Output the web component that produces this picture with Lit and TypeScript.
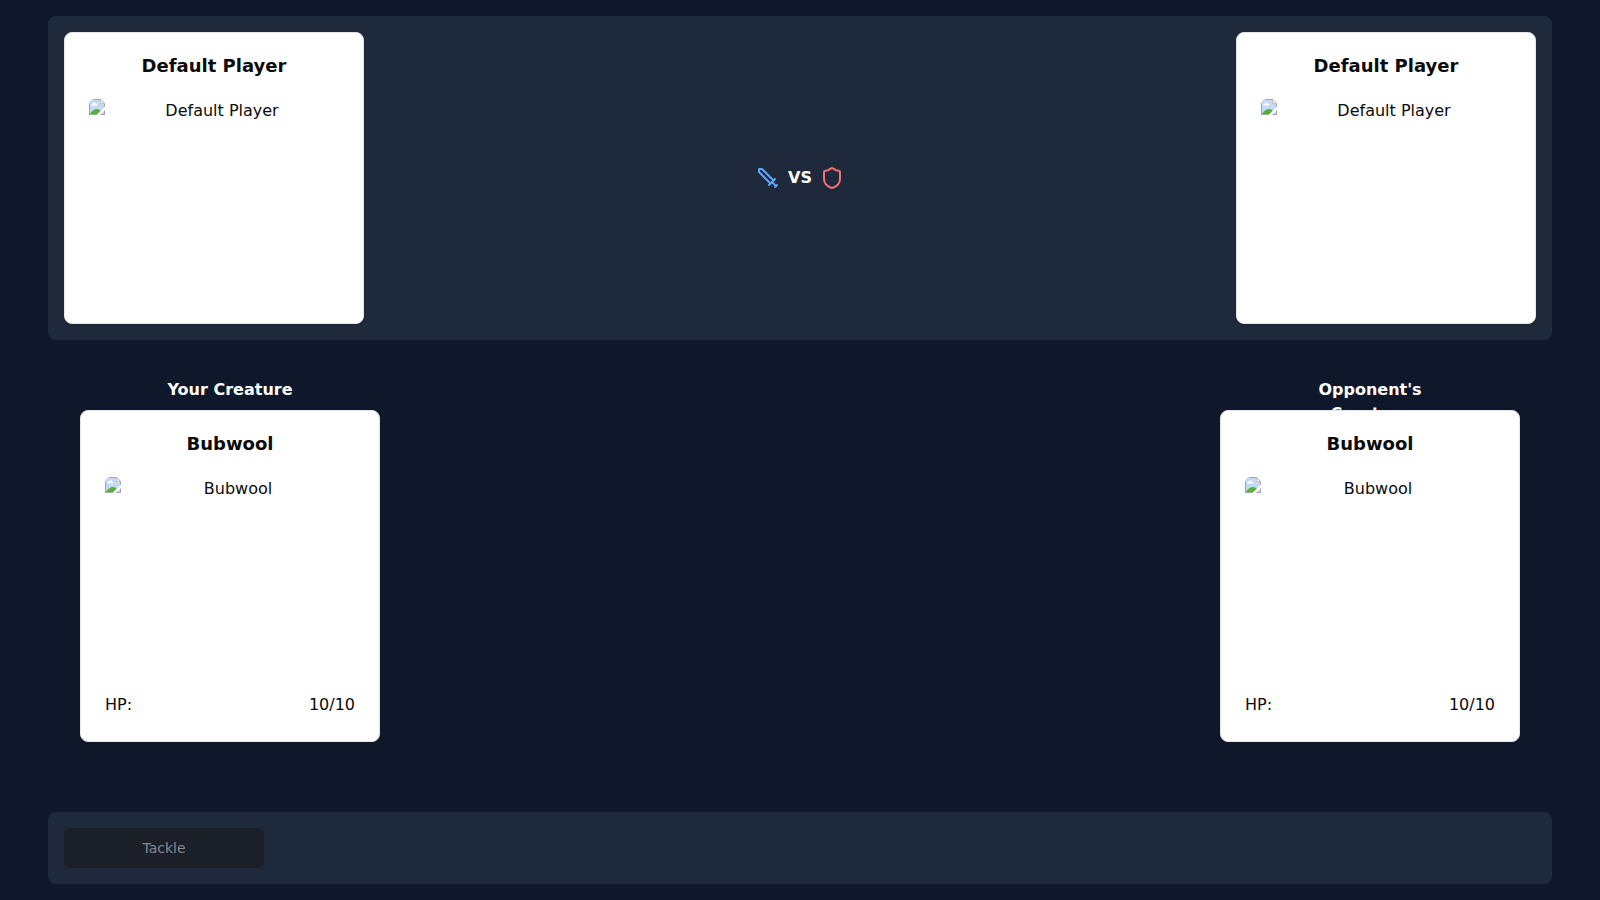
import { LitElement, html, css, nothing } from "lit";
import { customElement, property } from "lit/decorators.js";

@customElement("entity-card")
export class EntityCard extends LitElement {
  @property() name = "";
  @property({ type: Number }) hp?: number;
  @property({ type: Number }) maxHp?: number;

  static styles = css`
    :host {
      display: block;
      position: relative;
      box-sizing: border-box;
      width: 300px;
      padding: 24px;
      border: 1px solid #e5e5e5;
      border-radius: 8px;
      background: #fff;
      color: #0a0a0a;
      box-shadow: 0 1px 2px rgb(0 0 0 / 0.05);
    }
    .title {
      margin: 0 0 24px;
      font-size: 18px;
      line-height: 18px;
      font-weight: 700;
      text-align: center;
    }
    .picture {
      display: flex;
      height: 200px;
      border-radius: 6px;
      overflow: hidden;
      line-height: 24px;
    }
    .picture svg {
      flex: none;
      width: 16px;
      height: 16px;
    }
    .alt {
      flex: 1;
      text-align: center;
    }
    .stat {
      display: flex;
      justify-content: space-between;
      margin-top: 16px;
      line-height: 24px;
    }
  `;

  render() {
    return html`
      <h3 class="title">${this.name}</h3>
      <div class="picture">
        <svg viewBox="0 0 16 16" aria-hidden="true">
          <path d="M0 0H11.500L16 4.500V16H0Z" fill="#a3a3a3" />
          <path d="M1 1H11V5H15V15H1Z" fill="#c4d8f7" />
          <path d="M2 6.500C2 5.200 3 4.700 3.800 4.800C4.200 3.200 6.800 3.200 7 4.800C8.200 4.700 8.600 5.700 8.300 6.500Z" fill="#fff" />
          <path d="M1 15C3 11.500 5.500 10 8 10C10 10 11 11 12 12.500L13 15Z" fill="#56b03a" />
          <path d="M11.500 1L15 4.500H11.500Z" fill="#f7f7f7" />
          <path d="M7.500 16L16 7.500V11L11 16Z" fill="#fff" />
        </svg>
        <span class="alt">${this.name}</span>
      </div>
      ${this.hp === undefined
        ? nothing
        : html`<div class="stat">
            <span>HP:</span><span>${this.hp}/${this.maxHp}</span>
          </div>`}
    `;
  }
}

@customElement("app-root")
export class AppRoot extends LitElement {
  private skills = ["Tackle"];

  static styles = css`
    :host {
      display: flex;
      flex-direction: column;
      box-sizing: border-box;
      min-height: 100vh;
      padding: 16px 48px;
      background: #0f172a;
      color: #fff;
      font: 16px/24px "DejaVu Sans", sans-serif;
    }
    .panel {
      display: flex;
      padding: 16px;
      border-radius: 8px;
      background: #1e293b;
    }
    .players {
      align-items: center;
      justify-content: space-between;
    }
    .versus {
      display: flex;
      align-items: center;
      gap: 8px;
      font-weight: 700;
    }
    .versus svg {
      width: 24px;
      height: 24px;
      fill: none;
      stroke: currentColor;
      stroke-width: 2;
      stroke-linecap: round;
      stroke-linejoin: round;
    }
    .sword {
      color: #60a5fa;
    }
    .shield {
      color: #f87171;
    }
    .arena {
      display: flex;
      flex: 1;
      align-items: center;
      justify-content: space-between;
      padding: 0 32px;
    }
    .side {
      display: flex;
      flex-direction: column;
      align-items: center;
      margin-top: -32px;
    }
    .label {
      width: 50%;
      height: 32px;
      margin: 0;
      font-size: 16px;
      font-weight: 700;
      text-align: center;
    }
    .skills {
      gap: 16px;
    }
    .skill {
      width: 200px;
      height: 40px;
      padding: 8px 16px;
      border: 0;
      border-radius: 6px;
      background: #1b1f27;
      color: #858994;
      font: 14px/20px "DejaVu Sans", sans-serif;
    }
  `;

  render() {
    return html`
      <header class="panel players">
        <entity-card name="Default Player"></entity-card>
        <div class="versus">
          <svg class="sword" viewBox="0 0 24 24" aria-hidden="true">
            <polyline points="14.5 17.5 3 6 3 3 6 3 17.5 14.5" />
            <line x1="13" x2="19" y1="19" y2="13" />
            <line x1="16" x2="20" y1="16" y2="20" />
            <line x1="19" x2="21" y1="21" y2="19" />
          </svg>
          <span>VS</span>
          <svg class="shield" viewBox="0 0 24 24" aria-hidden="true">
            <path
              d="M20 13c0 5-3.5 7.500-7.660 8.950a1 1 0 0 1-.67-.01C7.500 20.500 4 18 4 13V6a1 1 0 0 1 1-1c2 0 4.500-1.200 6.240-2.720a1.170 1.170 0 0 1 1.520 0C14.510 3.810 17 5 19 5a1 1 0 0 1 1 1z"
            />
          </svg>
        </div>
        <entity-card name="Default Player"></entity-card>
      </header>
      <main class="arena">
        <section class="side">
          <h2 class="label">Your Creature</h2>
          <entity-card name="Bubwool" .hp=${10} .maxHp=${10}></entity-card>
        </section>
        <section class="side">
          <h2 class="label">Opponent's Creature</h2>
          <entity-card name="Bubwool" .hp=${10} .maxHp=${10}></entity-card>
        </section>
      </main>
      <footer class="panel skills">
        ${this.skills.map(
          (skill) => html`<button class="skill" disabled>${skill}</button>`
        )}
      </footer>
    `;
  }
}
